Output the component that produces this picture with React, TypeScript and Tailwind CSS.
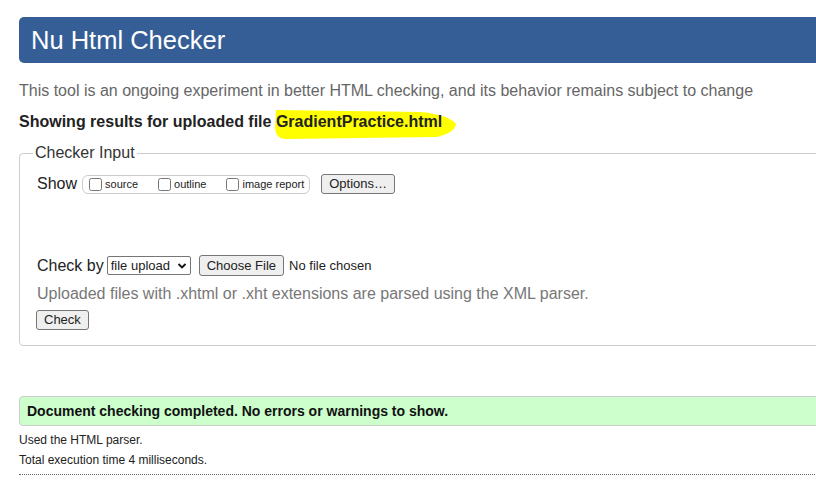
export default function App() {
  return (
    <div className="w-[816px] h-[486px] overflow-hidden bg-white font-['Liberation_Sans',Arial,sans-serif] text-[#222]">
      <div className="w-[1100px] ml-[19px]">
        <h1 className="mt-[17px] h-[46px] rounded-[5px] bg-[#365e96] pl-[12px] text-[25.5px] leading-[46px] text-white">
          Nu Html Checker
        </h1>
        <p className="mt-[18px] text-[16px] leading-[19px] text-[#666]">
          This tool is an ongoing experiment in better HTML checking, and its behavior remains subject to change
        </p>
        <p className="mt-[12px] text-[16px] font-bold leading-[19px]">
          Showing results for uploaded file{" "}
          <span className="relative inline-block">
            <svg className="absolute left-[-3px] top-[-5px]" width="186" height="34" viewBox="0 0 186 34">
              <path d="M3 3 L148 5 Q176 8 183 17 Q181 27 162 30 L12 32 Q3 32 2 21 Z" fill="#ffff00" />
            </svg>
            <span className="relative">GradientPractice.html</span>
          </span>
        </p>

        <fieldset className="mt-[13px] rounded-[4px] border border-[#ccc] pl-[17px] pb-[14px]">
          <legend className="-ml-[4px] px-[2px] text-[16px] leading-[18px] text-[#333]">Checker Input</legend>

          <div className="mt-[12px] flex h-[20px] items-center">
            <span className="text-[16px]">Show</span>
            <div className="ml-[5px] flex h-[19px] items-center rounded-[6px] border border-[#ccc] pl-[6px] pr-[5px] text-[11px]">
              <label className="flex items-center">
                <input type="checkbox" className="m-0 h-[13px] w-[13px]" />
                <span className="ml-[3px]">source</span>
              </label>
              <label className="ml-[20px] flex items-center">
                <input type="checkbox" className="m-0 h-[13px] w-[13px]" />
                <span className="ml-[3px]">outline</span>
              </label>
              <label className="ml-[20px] flex items-center">
                <input type="checkbox" className="m-0 h-[13px] w-[13px]" />
                <span className="ml-[3px]">image report</span>
              </label>
            </div>
            <button className="ml-[11px] h-[20px] rounded-[3px] border border-[#767676] bg-[#efefef] px-[7px] text-[13px] leading-[18px]">
              Options…
            </button>
          </div>

          <div className="mt-[61px] flex h-[21px] items-center">
            <span className="text-[16px]">Check by</span>
            <div className="ml-[3px] flex h-[19px] w-[84px] items-center justify-between rounded-[2px] border border-[#767676] bg-white pl-[3px] pr-[3px] text-[13px]">
              <span>file upload</span>
              <svg width="10" height="10" viewBox="0 0 10 10">
                <path d="M1.5 3 L5 6.5 L8.5 3" fill="none" stroke="#111" strokeWidth="1.8" />
              </svg>
            </div>
            <button className="ml-[8px] h-[21px] rounded-[3px] border border-[#767676] bg-[#efefef] px-[7px] text-[13px] leading-[19px]">
              Choose File
            </button>
            <span className="ml-[5px] text-[13px]">No file chosen</span>
          </div>

          <p className="mt-[8px] text-[16px] leading-[19px] text-[#777]">
            Uploaded files with .xhtml or .xht extensions are parsed using the XML parser.
          </p>

          <button className="mt-[7px] h-[20px] rounded-[3px] border border-[#767676] bg-[#efefef] px-[7px] text-[13px] leading-[18px] -ml-[1px]">
            Check
          </button>
        </fieldset>

        <div className="mt-[50px] h-[30px] rounded-[4px] border border-[#ccc] bg-[#ccffcc] pl-[7px] text-[14px] font-bold leading-[28px] text-[#111]">
          Document checking completed. No errors or warnings to show.
        </div>
        <p className="mt-[7px] text-[12px] leading-[14px]">Used the HTML parser.</p>
        <p className="mt-[6px] text-[12px] leading-[14px]">Total execution time 4 milliseconds.</p>
        <div className="mt-[7px] border-t border-dotted border-[#666]" />
      </div>
    </div>
  );
}
